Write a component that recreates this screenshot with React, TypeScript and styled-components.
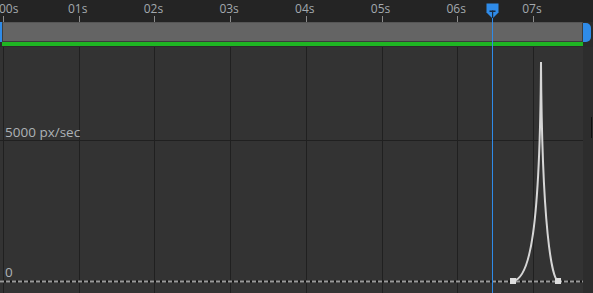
import styled, { createGlobalStyle } from "styled-components";

const SECOND = 75.71;
const ORIGIN = 3;
const TICKS = ["00s", "01s", "02s", "03s", "04s", "05s", "06s", "07s"];
const PLAYHEAD_X = 492;

const GlobalStyle = createGlobalStyle`
  html, body {
    margin: 0;
    padding: 0;
    background: #333333;
    overflow: hidden;
  }
  #root {
    width: 593px;
    height: 293px;
  }
`;

export default function App() {
  return (
    <>
      <GlobalStyle />
      <Editor>
        <Ruler>
          {TICKS.map((t, i) => (
            <TickCell key={t}>
              <TickLabel first={i === 0}>{t}</TickLabel>
            </TickCell>
          ))}
        </Ruler>
        <TrackRow>
          <Handle side="left" />
          <Bar />
          <Handle side="right" />
        </TrackRow>
        <GreenRow>
          <GreenLine />
        </GreenRow>
        <GraphRow>
          <Plot>
            <svg width="583" height="246" viewBox="0 0 583 246">
              {TICKS.map((t, i) => {
                const x = Math.round(ORIGIN + i * SECOND) + 0.5;
                return <line key={t} x1={x} y1={0} x2={x} y2={246} stroke="#202020" strokeWidth="1" />;
              })}
              <line x1={0} y1={93.5} x2={583} y2={93.5} stroke="#202020" strokeWidth="1" />
              <line x1={0} y1={234.5} x2={583} y2={234.5} stroke="#151515" strokeWidth="2" />
              <line
                x1={0}
                y1={234.5}
                x2={583}
                y2={234.5}
                stroke="#9a9a9a"
                strokeWidth="2"
                strokeDasharray="4 2"
              />
              <path
                d="M513 234 C530 232 540 183 541 15 C542 183 552 232 558 234"
                fill="none"
                stroke="#d6d6d6"
                strokeWidth="2"
              />
              <rect x={510} y={231} width={6} height={6} fill="#dedede" />
              <rect x={555} y={231} width={6} height={6} fill="#dedede" />
            </svg>
            <AxisLabel top={76}>5000 px/sec</AxisLabel>
            <AxisLabel top={216}>0</AxisLabel>
          </Plot>
          <ScrollStrip>
            <ScrollThumb />
          </ScrollStrip>
        </GraphRow>
        <Playhead style={{ left: PLAYHEAD_X - 6 }}>
          <svg width="13" height="16" viewBox="0 0 13 16">
            <path d="M0.5 0.5 H12.5 V9.5 L6.5 15.5 L0.5 9.5 Z" fill="#2f8be8" />
            <rect x="3.5" y="7.5" width="6" height="1.5" fill="#1a2b40" />
            <rect x="6" y="7.5" width="1.2" height="8.5" fill="#1a2b40" />
          </svg>
          <PlayLine />
        </Playhead>
      </Editor>
    </>
  );
}

const Editor = styled.div`
  position: relative;
  display: flex;
  flex-direction: column;
  width: 593px;
  height: 293px;
  overflow: hidden;
  background: #333333;
  font-family: "Open Sans", "Liberation Sans", sans-serif;
`;

const Ruler = styled.div`
  display: flex;
  height: 22px;
  padding-left: ${ORIGIN}px;
  background: #242424;
  flex-shrink: 0;
`;

const TickCell = styled.div`
  position: relative;
  width: ${SECOND}px;
  flex-shrink: 0;

  &::before {
    content: "";
    position: absolute;
    left: 0;
    bottom: 0;
    width: 1px;
    height: 6px;
    background: #8c8c8c;
  }
`;

const TickLabel = styled.span<{ first: boolean }>`
  position: absolute;
  left: ${(p) => (p.first ? "-4px" : "-1px")};
  top: 1px;
  transform: ${(p) => (p.first ? "none" : "translateX(-50%)")};
  font-size: 12px;
  line-height: 16px;
  color: #a3a9ae;
  white-space: nowrap;
`;

const TrackRow = styled.div`
  display: flex;
  align-items: stretch;
  height: 20px;
  background: #2b2b2b;
  flex-shrink: 0;
`;

const Bar = styled.div`
  width: 581px;
  box-sizing: border-box;
  background: #646464;
  border: 1px solid #3c3c3c;
  border-top-color: #565656;
`;

const Handle = styled.div<{ side: "left" | "right" }>`
  width: ${(p) => (p.side === "left" ? 2 : 8)}px;
  margin-top: ${(p) => (p.side === "left" ? 0 : 1)}px;
  background: #2f8be8;
  border-radius: ${(p) => (p.side === "left" ? "0" : "0 5px 5px 0")};
`;

const GreenRow = styled.div`
  display: flex;
  height: 5px;
  padding-left: 2px;
  background: #2b2b2b;
  flex-shrink: 0;
`;

const GreenLine = styled.div`
  width: 581px;
  height: 4px;
  background: #1fb523;
`;

const GraphRow = styled.div`
  display: flex;
  flex: 1;
`;

const Plot = styled.div`
  position: relative;
  width: 583px;
  background: #333333;

  svg {
    display: block;
  }
`;

const AxisLabel = styled.span<{ top: number }>`
  position: absolute;
  left: 5px;
  top: ${(p) => p.top}px;
  font-size: 13.5px;
  line-height: 18px;
  color: #adb2b6;
`;

const ScrollStrip = styled.div`
  position: relative;
  width: 10px;
  background: #2d2d2d;
`;

const ScrollThumb = styled.div`
  position: absolute;
  left: 8px;
  top: 70px;
  width: 1px;
  height: 21px;
  background: #111111;
`;

const Playhead = styled.div`
  position: absolute;
  top: 3px;
  bottom: 0;
  width: 13px;
  display: flex;
  flex-direction: column;
  align-items: center;
`;

const PlayLine = styled.div`
  flex: 1;
  width: 1px;
  margin-top: -1px;
  background: #2f8be8;
`;
